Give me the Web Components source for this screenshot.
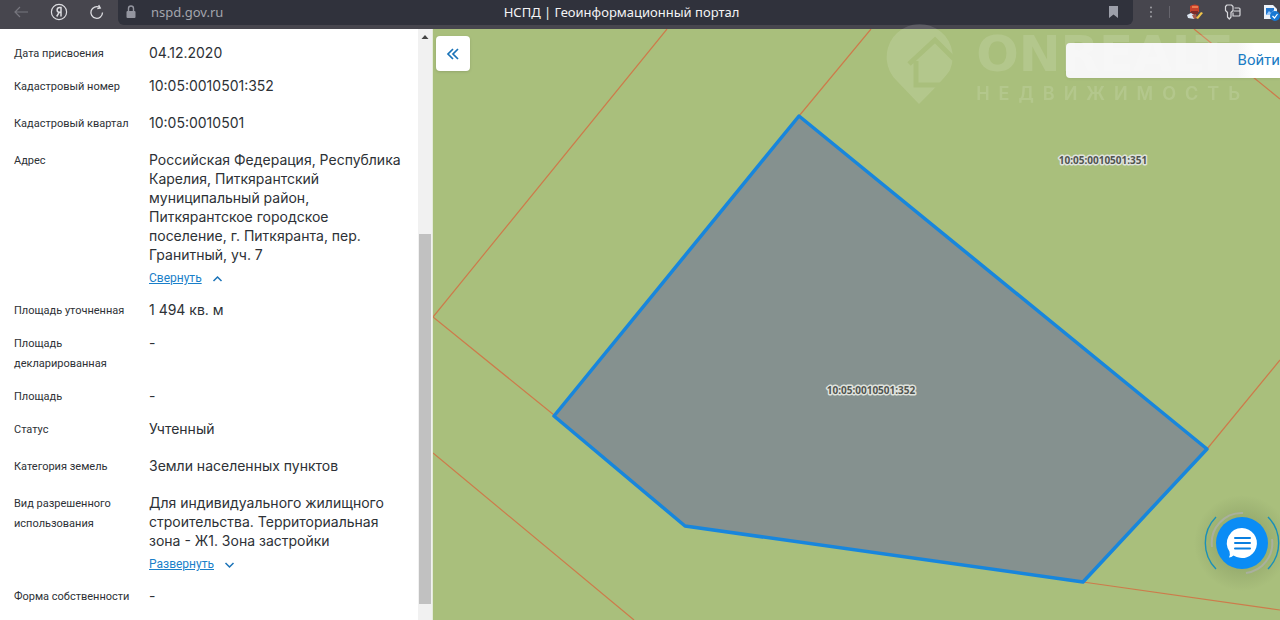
<!DOCTYPE html>
<html lang="ru">
<head>
<meta charset="utf-8">
<meta name="viewport" content="width=device-width, initial-scale=1">
<title>НСПД | Геоинформационный портал</title>
<style>
html, body { margin: 0; height: 100%; }
body { font-family: Inter, sans-serif; overflow: hidden; }
</style>
</head>
<body>
<portal-app></portal-app>
<script>
function define(name, html) {
  const template = document.createElement('template');
  template.innerHTML = html;
  customElements.define(name, class extends HTMLElement {
    constructor() {
      super();
      this.attachShadow({ mode: 'open' }).append(template.content.cloneNode(true));
    }
  });
}

/* Browser toolbar with navigation, address field and extensions */
define('browser-bar', `
<style>
:host { display: flex; height: 29px; background: #47464e; font-family: "Noto Sans", sans-serif; overflow: hidden; box-sizing: border-box; }
button { border: 0; padding: 0; margin: 0; background: none; display: flex; }
nav { flex: 0 0 118px; display: flex; align-items: center; gap: 20px; padding: 0 12px 5px 13px; box-sizing: border-box; }
.field { flex: 1; height: 25px; background: #30323c; border-radius: 0 0 6px 6px; display: grid; grid-template-columns: 1fr auto 1fr; align-items: center; padding: 0 14px 2px 6px; box-sizing: border-box; }
.site { display: flex; align-items: center; gap: 13px; color: #a3a5ad; font-size: 13px; line-height: 22px; }
.title { color: #f4f4f6; font-size: 13px; line-height: 22px; margin: 0; font-weight: 400; }
.mark { justify-self: end; }
.ext { flex: 0 0 147px; display: flex; align-items: center; padding: 0 0 5px 14px; box-sizing: border-box; }
.ext .sep { width: 1px; height: 12px; background: #66656d; margin: 0 16px 0 14px; }
.ext button + button { margin-left: 20px; }
</style>
<nav>
  <button aria-label="Назад"><svg width="16" height="16" viewBox="0 0 16 16" fill="none" stroke="#77767e" stroke-width="1.2"><path d="M15 8H2M7 3 2 8l5 5"/></svg></button>
  <button aria-label="Яндекс"><svg width="20" height="20" viewBox="0 0 20 20" fill="none" stroke="#dcdce0" stroke-width="1.2"><circle cx="10" cy="10" r="7.6"/><path stroke-width="1.5" d="M12 14.5v-9h-1.300c-3.400 0-3.400 4.800 0 4.800H12M10.200 10.300 7.700 14.500"/></svg></button>
  <button aria-label="Обновить"><svg width="16" height="18" viewBox="0 0 16 18" fill="none" stroke="#dcdce0" stroke-width="1.3"><path d="M13.500 9.500A5.800 5.800 0 1 1 10.500 4.400M8.300 5.700l3-.6L9.700 2"/></svg></button>
</nav>
<div class="field">
  <div class="site"><svg width="14" height="16" viewBox="0 0 14 16"><rect x="2.500" y="7" width="9" height="7" rx="1" fill="#9496a0"/><path d="M4.500 7V4.500a2.500 2.500 0 0 1 5 0V7" fill="none" stroke="#9496a0" stroke-width="1.400"/></svg><span>nspd.gov.ru</span></div>
  <h1 class="title">НСПД | Геоинформационный портал</h1>
  <button class="mark" aria-label="В закладки"><svg width="11" height="14" viewBox="0 0 11 14"><path d="M1 1h9v12L5.500 9.500 1 13z" fill="#9da0aa"/></svg></button>
</div>
<div class="ext">
  <button aria-label="Меню"><svg width="8" height="16" viewBox="0 0 8 16" fill="#a7a7ad"><circle cx="4" cy="3.500" r=".9"/><circle cx="4" cy="8" r=".9"/><circle cx="4" cy="12.500" r=".9"/></svg></button>
  <span class="sep"></span>
  <button aria-label="Расширение"><svg width="18" height="18" viewBox="0 0 18 18"><path d="M4 3q5-3 9 0v6H4z" fill="#c7412b"/><path d="M6 3h6v2H6z" fill="#eb7a4e"/><path d="M5 8h7v3H5z" fill="#7c2c29"/><path d="m1 12 4-2 5 3-2 3-6-1z" fill="#dbe5f0"/><path d="m6 12 4-1 1 4-3 1z" fill="#aa5b4b"/><path d="m10 15 5-6 2 1-5 6z" fill="#f0c44a"/></svg></button>
  <button aria-label="Пароли"><svg width="18" height="18" viewBox="0 0 18 18" fill="none" stroke="#d8d8dc" stroke-width="1.200" stroke-linejoin="round"><path d="M3.500 9.500 1.500 7.500v-4l1.500-1.500h4.500L9 3.500v4L7 9.500V14l-1.700 2-1.800-2z"/><path d="M10.500 5h4.500q1 0 1 1v6q0 1-1 1H9V9.500M9.500 8H16"/></svg></button>
  <button aria-label="Документ"><svg width="18" height="20" viewBox="0 0 18 20"><path d="M2 3h9l4 4v10H2z" fill="#eef2f8"/><path d="M4 6h8v7H4z" fill="#2177cf"/><path d="m4 13 3-4 2 2 3-3v5z" fill="#9bcafb"/><circle cx="13" cy="14" r="5" fill="#1778d3"/><path d="m10.500 14 2 2 3-4" fill="none" stroke="#fff" stroke-width="1.200"/></svg></button>
</div>`);

/* One attribute of the land plot: label and value */
define('info-row', `
<style>
:host { display: grid; grid-template-columns: 135px 1fr; margin-bottom: 17px; color: #2d3136; }
:host([compact]) { margin-bottom: 13px; }
.label { font: 11px/20px Roboto, sans-serif; padding: 1px 8px 0 0; margin-bottom: -1px; }
.value { font-size: 14px; line-height: 19px; min-height: 20px; }
</style>
<div class="label"><slot name="label"></slot></div>
<div class="value"><slot></slot><slot name="toggle"></slot></div>`);

/* Link that folds or unfolds a long value */
define('fold-link', `
<style>
:host { display: block; margin: 2px 0 -2px; line-height: 21px; }
a { color: #1a7fc9; font: 12px/21px Roboto, sans-serif; display: inline-flex; align-items: center; gap: 10px; text-decoration: none; }
span { text-decoration: underline; text-underline-offset: 1px; }
:host([open]) svg { transform: rotate(180deg); }
</style>
<a href="#"><span><slot></slot></span><svg width="11" height="8" viewBox="0 0 11 8" fill="none" stroke="#1a73b8" stroke-width="1.500"><path d="m1.500 2 4 4 4-4"/></svg></a>`);

define('scroll-rail', `
<style>
:host { display: flex; flex-direction: column; align-items: center; flex: 0 0 14px; background: #f1f1f1; }
svg { flex: none; margin-top: 5px; }
.before { flex: 194; } .thumb { flex: 370; width: 12px; background: #c1c1c1; } .after { flex: 16; }
</style>
<svg width="8" height="6" viewBox="0 0 8 6"><path d="m4 1 3.500 4h-7z" fill="#454545"/></svg>
<span class="before"></span><span class="thumb"></span><span class="after"></span>`);

define('info-panel', `
<style>
:host { display: flex; flex: 0 0 433px; background: #fff; border-right: 1px solid #e4ead9; box-sizing: border-box; min-height: 0; }
.list { flex: 1; min-width: 0; overflow: hidden; padding: 14px 14px 0; box-sizing: border-box; }
</style>
<div class="list">
  <info-row compact><span slot="label">Дата присвоения</span>04.12.2020</info-row>
  <info-row><span slot="label">Кадастровый номер</span>10:05:0010501:352</info-row>
  <info-row><span slot="label">Кадастровый квартал</span>10:05:0010501</info-row>
  <info-row compact><span slot="label">Адрес</span>Российская Федерация, Республика Карелия, Питкярантский муниципальный район, Питкярантское городское поселение, г. Питкяранта, пер. Гранитный, уч. 7<fold-link slot="toggle" open>Свернуть</fold-link></info-row>
  <info-row compact><span slot="label">Площадь уточненная</span>1 494 кв. м</info-row>
  <info-row compact><span slot="label">Площадь декларированная</span>-</info-row>
  <info-row compact><span slot="label">Площадь</span>-</info-row>
  <info-row><span slot="label">Статус</span>Учтенный</info-row>
  <info-row><span slot="label">Категория земель</span>Земли населенных пунктов</info-row>
  <info-row compact><span slot="label">Вид разрешенного использования</span>Для индивидуального жилищного строительства. Территориальная зона - Ж1. Зона застройки<fold-link slot="toggle">Развернуть</fold-link></info-row>
  <info-row><span slot="label">Форма собственности</span>-</info-row>
</div>
<scroll-rail></scroll-rail>`);

/* Agency mark laid over the corner of the map */
define('agency-mark', `
<style>
:host { display: flex; gap: 21px; color: #fff; opacity: .12; font-family: Inter, sans-serif; pointer-events: none; }
.words { padding-top: 2px; }
.name { font: 700 50px/58px "DejaVu Sans", sans-serif; }
.sub { font-size: 18px; line-height: 22px; font-weight: 600; letter-spacing: 9px; margin-right: -9px; }
</style>
<svg width="72" height="84" viewBox="0 0 72 84"><mask id="house"><path fill="#fff" d="M0 0h72v84H0z"/><path d="m26 41 26-24 19 19M33 38v24h26" fill="none" stroke="#000" stroke-width="5"/></mask><path mask="url(#house)" fill="currentColor" d="M36 81 14 58A33 33 0 1 1 67 47Q63 54 36 81z"/></svg>
<div class="words"><div class="name">ONREALT</div><div class="sub">НЕДВИЖИМОСТЬ</div></div>`);

define('chat-button', `
<style>
:host { display: block; }
button { border: 0; padding: 0; background: none; display: block; }
svg { display: block; overflow: visible; }
</style>
<button aria-label="Чат поддержки"><svg width="76" height="64" viewBox="0 0 76 64" fill="none">
<radialGradient id="glow"><stop offset=".5" stop-color="#5a6a40" stop-opacity=".22"/><stop offset="1" stop-color="#5a6a40" stop-opacity="0"/></radialGradient>
<circle cx="38" cy="32" r="48" fill="url(#glow)"/>
<g stroke="#1a90b8" stroke-width="1.400"><path d="M12 6a37 37 0 0 0 0 52M64 6a37 37 0 0 1 0 52"/></g>
<path d="M8 36A30 30 0 0 1 39 2M68 28A30 30 0 0 1 42 62" stroke="#a9b09e" stroke-width="2"/>
<circle cx="38" cy="32" r="26" fill="#0a8cf5"/>
<path d="M38 17a15 15 0 1 1-8.500 27.400q-2 1.800-4.500 2 1.500-2 .5-6A15 15 0 0 1 38 17z" fill="#fff"/>
<path d="M31 27h15M31 32h15M31 37.500h15" stroke="#0a7fe0" stroke-width="2" stroke-linecap="round"/></svg></button>`);

define('cadastre-map', `
<style>
:host { display: block; flex: 1; min-width: 0; position: relative; background: #a9bf7c; }
.land { display: block; width: 100%; height: 100%; }
.land text { font: 700 10px "Noto Sans", sans-serif; fill: #50544f; stroke: #dfe2dd; stroke-width: 3px; paint-order: stroke; stroke-linejoin: round; text-anchor: middle; }
.collapse { position: absolute; left: 3px; top: 7px; width: 34px; height: 35px; border: 0; border-radius: 4px; background: #fff; padding: 0; display: grid; place-items: center; box-shadow: 0 1px 3px #0002; }
.login { position: absolute; right: 0; top: 14px; width: 214px; height: 35px; border: 0; border-radius: 4px 0 0 4px; background: linear-gradient(90deg, #f6f6f6 80%, #fff 88%); padding: 0 0 2px; text-align: right; color: #1b7cc4; font: 15px Roboto, sans-serif; box-shadow: 0 1px 3px #0001; }
agency-mark { position: absolute; right: 40px; top: -6px; }
chat-button { position: absolute; right: 0; bottom: 45px; }
</style>
<svg class="land" viewBox="0 0 847 591" preserveAspectRatio="xMinYMin slice" role="img" aria-label="Кадастровая карта">
  <g fill="none" stroke="#cd7b4b" stroke-width="1.200"><path d="M234 0 0 288l121 98M366 87l72-87M0 424l201 167M774 420l73-89M650 553l197 28M761 0l86 70"/></g>
  <path d="M366 87 774 420 650 553 252 497 121 387z" fill="#85918f" stroke="#1886dc" stroke-width="3.500" stroke-linejoin="round"/>
  <text x="438" y="365">10:05:0010501:352</text>
  <text x="670" y="135">10:05:0010501:351</text>
</svg>
<button class="collapse" aria-label="Свернуть панель"><svg width="14" height="14" viewBox="0 0 14 14" fill="none" stroke="#1a73b8" stroke-width="1.700"><path d="M7 2 2 7l5 5M12 2 7 7l5 5"/></svg></button>
<button class="login">Войти</button>
<agency-mark></agency-mark>
<chat-button></chat-button>`);

define('portal-app', `
<style>
:host { display: flex; flex-direction: column; height: 100vh; overflow: hidden; }
main { flex: 1; display: flex; min-height: 0; }
</style>
<browser-bar></browser-bar>
<main><info-panel></info-panel><cadastre-map></cadastre-map></main>`);
</script>
</body>
</html>
